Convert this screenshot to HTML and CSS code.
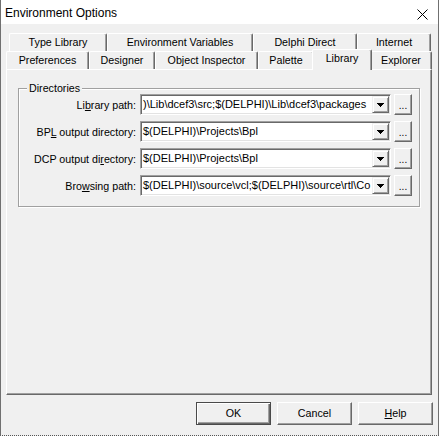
FILE: index.html
```html
<!DOCTYPE html>
<html>
<head>
<meta charset="utf-8">
<title>Environment Options</title>
<link rel="stylesheet" href="styles.css">
</head>
<body>
<div class="window">
  <div class="titlebar">
    <span class="title">Environment Options</span>
    <svg class="close" width="11" height="11" viewBox="0 0 11 11"><path d="M0.5 0.5L10.5 10.5M10.5 0.5L0.5 10.5" stroke="#000" stroke-width="1"/></svg>
  </div>
  <div class="client">
    <div class="tabs">
      <div class="tabrow back">
        <div class="tab w-typelib">Type Library</div>
        <div class="tab w-envvars">Environment Variables</div>
        <div class="tab w-delphi">Delphi Direct</div>
        <div class="tab w-internet">Internet</div>
      </div>
      <div class="tabrow front">
        <div class="tab w-prefs">Preferences</div>
        <div class="tab w-designer">Designer</div>
        <div class="tab w-objinsp">Object Inspector</div>
        <div class="tab w-palette">Palette</div>
        <div class="tab active w-library">Library</div>
        <div class="tab w-explorer">Explorer</div>
      </div>
      <div class="page">
        <div class="group">
          <span class="group-title">Directories</span>
          <div class="rows">
            <label class="lbl">Li<u>b</u>rary path:</label>
            <div class="combo"><span class="combo-text">)\Lib\dcef3\src;$(DELPHI)\Lib\dcef3\packages</span><span class="drop"><svg width="7" height="4" viewBox="0 0 7 4"><rect x="0" y="0" width="7" height="1"/><rect x="1" y="1" width="5" height="1"/><rect x="2" y="2" width="3" height="1"/><rect x="3" y="3" width="1" height="1"/></svg></span></div>
            <div class="dots">...</div>

            <label class="lbl">BP<u>L</u> output directory:</label>
            <div class="combo"><span class="combo-text">$(DELPHI)\Projects\Bpl</span><span class="drop"><svg width="7" height="4" viewBox="0 0 7 4"><rect x="0" y="0" width="7" height="1"/><rect x="1" y="1" width="5" height="1"/><rect x="2" y="2" width="3" height="1"/><rect x="3" y="3" width="1" height="1"/></svg></span></div>
            <div class="dots">...</div>

            <label class="lbl">DCP output di<u>r</u>ectory:</label>
            <div class="combo"><span class="combo-text">$(DELPHI)\Projects\Bpl</span><span class="drop"><svg width="7" height="4" viewBox="0 0 7 4"><rect x="0" y="0" width="7" height="1"/><rect x="1" y="1" width="5" height="1"/><rect x="2" y="2" width="3" height="1"/><rect x="3" y="3" width="1" height="1"/></svg></span></div>
            <div class="dots">...</div>

            <label class="lbl">Bro<u>w</u>sing path:</label>
            <div class="combo"><span class="combo-text">$(DELPHI)\source\vcl;$(DELPHI)\source\rtl\Co</span><span class="drop"><svg width="7" height="4" viewBox="0 0 7 4"><rect x="0" y="0" width="7" height="1"/><rect x="1" y="1" width="5" height="1"/><rect x="2" y="2" width="3" height="1"/><rect x="3" y="3" width="1" height="1"/></svg></span></div>
            <div class="dots">...</div>
          </div>
        </div>
      </div>
    </div>
    <div class="buttons">
      <div class="btn default">OK</div>
      <div class="btn">Cancel</div>
      <div class="btn"><u>H</u>elp</div>
    </div>
  </div>
</div>
</body>
</html>
```

FILE: styles.css
```css
html, body {
  margin: 0;
  padding: 0;
  background: #f0f0f0;
}

.window {
  box-sizing: border-box;
  width: 439px;
  height: 436px;
  background: #f0f0f0;
  border-left: 1px solid #707070;
  border-right: 1px solid #707070;
  border-bottom: 1px dotted #555;
  display: flex;
  flex-direction: column;
  font-family: "Liberation Sans", Arial, sans-serif;
  font-size: 10.7px;
  color: #000;
}

.titlebar {
  height: 24px;
  background: #fff;
  display: flex;
  align-items: center;
  justify-content: space-between;
  padding: 2px 10px 0 4px;
  box-sizing: border-box;
}

.title {
  font-size: 12px;
  color: #000;
}

.close {
  display: block;
  margin-top: 3px;
}

.client {
  flex: 1;
  display: flex;
  flex-direction: column;
  padding: 9px 6px 0 5px;
}

.tabs {
  display: flex;
  flex-direction: column;
}

.tabrow {
  display: flex;
  height: 18px;
  align-items: flex-start;
}

.tabrow.back {
  margin-left: 3px;
}

.tab {
  box-sizing: border-box;
  height: 18px;
  border-top: 1px solid #fff;
  border-left: 1px solid #fff;
  border-right: 1px solid #696969;
  box-shadow: inset -1px 0 0 #a0a0a0;
  border-radius: 2px 2px 0 0;
  background: #f0f0f0;
  text-align: center;
  line-height: 16px;
  white-space: nowrap;
}

.tab.active {
  position: relative;
  z-index: 1;
  height: 21px;
  margin: -2px -2px -1px -2px;
  line-height: 16px;
}

.w-typelib { width: 98px; }
.w-envvars { width: 146px; }
.w-delphi { width: 104px; }
.w-internet { width: 74px; }
.w-prefs { width: 83px; }
.w-designer { width: 66px; }
.w-objinsp { width: 103px; }
.w-palette { width: 56px; }
.w-library { width: 60px; }
.w-explorer { width: 62px; }

.page {
  box-sizing: border-box;
  height: 326px;
  border-top: 1px solid #fff;
  border-left: 1px solid #fff;
  border-right: 1px solid #696969;
  border-bottom: 1px solid #696969;
  box-shadow: inset -1px -1px 0 #a0a0a0;
  padding: 18px 11px 0 11px;
}

.group {
  position: relative;
  border: 1px solid #a0a0a0;
  box-shadow: inset 1px 1px 0 #fff, 1px 1px 0 #fff;
  padding: 5px 0 10px 0;
}

.group-title {
  position: absolute;
  top: -7px;
  left: 8px;
  padding: 0 2px;
  background: #f0f0f0;
  line-height: 13px;
}

.rows {
  display: grid;
  grid-template-columns: 117px 251px 18px;
  column-gap: 4px;
  row-gap: 6px;
  align-items: center;
}

.rows .dots {
  margin-left: -1px;
}

.lbl {
  text-align: right;
  white-space: nowrap;
}

.combo {
  box-sizing: border-box;
  height: 21px;
  border: 1px solid;
  border-color: #a0a0a0 #fff #fff #a0a0a0;
  box-shadow: inset 1px 1px 0 #696969, inset -1px -1px 0 #e3e3e3;
  padding: 1px;
  background: #fff;
  display: flex;
  overflow: hidden;
}

.combo-text {
  flex: 1;
  min-width: 0;
  overflow: hidden;
  white-space: nowrap;
  line-height: 17px;
  padding-left: 1px;
  font-size: 11px;
}

.drop {
  box-sizing: border-box;
  flex: none;
  width: 17px;
  height: 17px;
  background: #f0f0f0;
  border: 1px solid;
  border-color: #f0f0f0 #696969 #696969 #f0f0f0;
  box-shadow: inset 1px 1px 0 #fff, inset -1px -1px 0 #a0a0a0;
  display: flex;
  align-items: center;
  justify-content: center;
}

.drop svg {
  display: block;
  fill: #000;
}

.dots {
  box-sizing: border-box;
  height: 21px;
  width: 18px;
  border: 1px solid;
  border-color: #fff #696969 #696969 #fff;
  box-shadow: inset -1px -1px 0 #a0a0a0;
  text-align: center;
  line-height: 21px;
  font-size: 10px;
}

.buttons {
  display: flex;
  justify-content: flex-end;
  gap: 6px;
  margin-top: 7px;
  margin-right: -1px;
}

.btn {
  box-sizing: border-box;
  width: 75px;
  height: 23px;
  border: 1px solid;
  border-color: #fff #696969 #696969 #fff;
  box-shadow: inset -1px -1px 0 #a0a0a0;
  text-align: center;
  line-height: 21px;
}

.btn.default {
  border-color: #4a4a4a;
  box-shadow: inset 1px 1px 0 #fff, inset -1px -1px 0 #696969, inset -2px -2px 0 #a0a0a0;
}
```
